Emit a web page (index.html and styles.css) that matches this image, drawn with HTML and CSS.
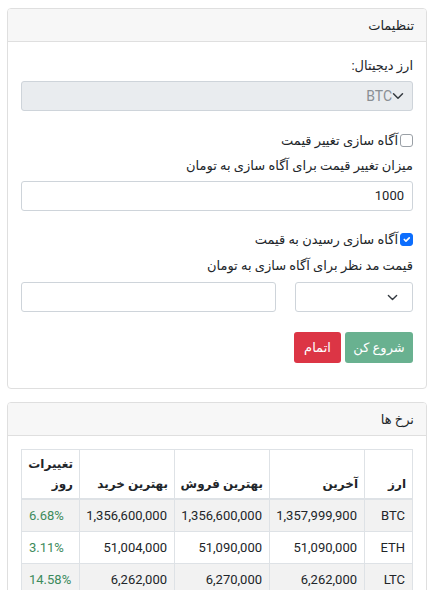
FILE: index.html
```html
<!DOCTYPE html>
<html lang="fa" dir="rtl">
<head>
<meta charset="utf-8">
<title>تنظیمات</title>
<link rel="stylesheet" href="styles.css">
</head>
<body>
<div class="page">
  <section class="card">
    <div class="card-header">تنظیمات</div>
    <div class="card-body">
      <label class="label">ارز دیجیتال:</label>
      <div class="select select-disabled">
        <svg class="chev" viewBox="0 0 16 16" width="12" height="12"><path d="M2 5l6 6 6-6" fill="none" stroke="#343a40" stroke-width="2" stroke-linecap="round" stroke-linejoin="round"/></svg>
        <span>BTC</span>
      </div>
      <label class="check"><span class="box"></span>آگاه سازی تغییر قیمت</label>
      <label class="label">میزان تغییر قیمت برای آگاه سازی به تومان</label>
      <div class="input">1000</div>
      <label class="check check-2"><span class="box box-checked"><svg viewBox="0 0 20 20" width="13" height="13"><path d="M6 10l3 3 6-6" fill="none" stroke="#fff" stroke-width="3" stroke-linecap="round" stroke-linejoin="round"/></svg></span>آگاه سازی رسیدن به قیمت</label>
      <label class="label">قیمت مد نظر برای آگاه سازی به تومان</label>
      <div class="pair">
        <div class="select select-empty">
          <svg class="chev" viewBox="0 0 16 16" width="11" height="11"><path d="M2 5l6 6 6-6" fill="none" stroke="#343a40" stroke-width="2" stroke-linecap="round" stroke-linejoin="round"/></svg>
        </div>
        <div class="input"></div>
      </div>
      <div class="actions">
        <button class="btn btn-success">شروع کن</button>
        <button class="btn btn-danger">اتمام</button>
      </div>
    </div>
  </section>

  <section class="card">
    <div class="card-header">نرخ ها</div>
    <div class="card-body card-body-table">
      <table class="rates">
        <colgroup>
          <col class="c-cur"><col class="c-num"><col class="c-num"><col class="c-num"><col class="c-chg">
        </colgroup>
        <thead>
          <tr><th>ارز</th><th>آخرین</th><th>بهترین فروش</th><th>بهترین خرید</th><th class="wrap">تغییرات روز</th></tr>
        </thead>
        <tbody>
          <tr class="odd"><td>BTC</td><td>1,357,999,900</td><td>1,356,600,000</td><td>1,356,600,000</td><td class="pct">6.68%</td></tr>
          <tr><td>ETH</td><td>51,090,000</td><td>51,090,000</td><td>51,004,000</td><td class="pct">3.11%</td></tr>
          <tr class="odd"><td>LTC</td><td>6,262,000</td><td>6,270,000</td><td>6,262,000</td><td class="pct">14.58%</td></tr>
        </tbody>
      </table>
    </div>
  </section>
</div>
</body>
</html>
```
FILE: styles.css
```css
* { box-sizing: border-box; }
html, body { margin: 0; padding: 0; }
body {
  font-family: Roboto, "DejaVu Sans", sans-serif;
  font-size: 13px;
  line-height: 21px;
  color: #212529;
  background: #fff;
}
.page {
  padding: 8px 9px 0 7px;
  display: flex;
  flex-direction: column;
  gap: 13px;
}
.card {
  border: 1px solid #dfdfdf;
  border-radius: 4px;
  background: #fff;
}
.card-header {
  background: #f7f7f7;
  padding: 6px 12px 5px;
  border-bottom: 1px solid #dfdfdf;
  border-radius: 3px 3px 0 0;
}
.card-body {
  padding: 13px 13px 25px;
  display: flex;
  flex-direction: column;
}
.label { display: block; margin-bottom: 5px; }
.select {
  height: 30px;
  border: 1px solid #ced4da;
  border-radius: 3px;
  display: flex;
  align-items: center;
  background: #fff;
}
.select-disabled {
  background: #e9ecef;
  padding-right: 8px;
  color: #8a8f94;
  font-size: 14px;
  margin-bottom: 19px;
}
.select-empty { padding-right: 14px; }
.input {
  height: 30px;
  border: 1px solid #ced4da;
  border-radius: 3px;
  padding: 0 8px;
  line-height: 28px;
  font-size: 13px;
  background: #fff;
}
.check {
  display: flex;
  align-items: center;
  gap: 2px;
  margin-bottom: 4px;
}
.check-2 { margin-bottom: 5px; }
.box {
  width: 13px;
  height: 13px;
  border: 1px solid #9aa0a6;
  border-radius: 3px;
  display: flex;
  align-items: center;
  justify-content: center;
  background: #fff;
}
.box-checked { background: #0d6efd; border-color: #0d6efd; }
.card-body > .input { margin-bottom: 18px; }
.pair {
  display: grid;
  grid-template-columns: 118px 1fr;
  gap: 19px;
  margin-top: 1px;
  margin-bottom: 20px;
}
.actions { display: flex; gap: 4px; }
.btn {
  font-family: inherit;
  font-size: 13px;
  height: 31px;
  border: none;
  border-radius: 3px;
  color: #fff;
  padding: 0 8px;
  line-height: 31px;
  white-space: nowrap;
}
.btn-success { background: #69b190; min-width: 68px; }
.btn-danger { background: #dc3545; min-width: 47px; }
.card-body-table { padding-bottom: 13px; }
.rates {
  width: 100%;
  table-layout: fixed;
  border-collapse: collapse;
  font-size: 13px;
}
.c-cur { width: 48px; }
.c-num { width: 95px; }
.c-chg { width: 58px; }
.rates th, .rates td {
  border: 1px solid #dee2e6;
  text-align: right;
  padding: 5px 7px;
  line-height: 21px;
  white-space: nowrap;
}
.rates th {
  vertical-align: bottom;
  padding: 4px 6px;
  line-height: 20px;
  border-bottom: 2px solid #dee2e6;
  font-weight: bold;
  font-size: 12px;
}
.rates th.wrap { white-space: normal; }
.rates tr.odd td { background: #f2f2f2; }
.rates td.pct { text-align: left; direction: ltr; color: #3d8a5c; }
```
